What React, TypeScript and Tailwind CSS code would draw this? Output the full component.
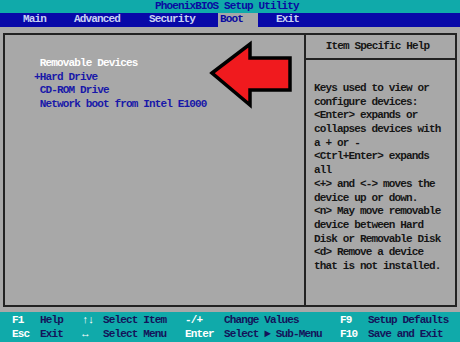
import React from "react";

const font = "font-['Liberation_Mono','DejaVu_Sans_Mono',monospace] text-[11px] tracking-[-0.85px] leading-[13.68px] font-bold";

const help = [
  "Keys used to view or",
  "configure devices:",
  "<Enter> expands or",
  "collapses devices with",
  "a + or -",
  "<Ctrl+Enter> expands",
  "all",
  "<+> and <-> moves the",
  "device up or down.",
  "<n> May move removable",
  "device between Hard",
  "Disk or Removable Disk",
  "<d> Remove a device",
  "that is not installed.",
];

function FooterLine({ cells }: { cells: string[] }) {
  const widths = ["w-[28px]", "w-[42px]", "w-[21px]", "w-[82px]", "w-[39px]", "w-[116px]", "w-[28px]", "w-[90px]"];
  return (
    <div className="flex pl-[12px] h-[13.68px]">
      {cells.map((c, i) => (
        <span
          key={i}
          className={`${widths[i]} shrink-0 whitespace-pre ${i % 2 === 0 ? "text-white" : "text-[#14145a]"}`}
        >
          {c}
        </span>
      ))}
    </div>
  );
}

export default function App() {
  return (
    <div className={`w-[460px] h-[342px] overflow-hidden bg-[#a8a8a8] flex flex-col ${font}`}>
      {/* Title */}
      <div className="h-[13px] bg-[#10aaaa] flex items-center pl-[155px] text-[#0a0aa0] whitespace-pre">
        PhoenixBIOS Setup Utility
      </div>
      {/* Menu */}
      <div className="h-[14px] bg-[#0808a8] flex items-center text-[#c8d0f4] whitespace-pre">
        <span className="ml-[23px] w-[51px]">Main</span>
        <span className="w-[75px]">Advanced</span>
        <span className="w-[69px]">Security</span>
        <span className="w-[40px] h-full bg-[#a8a8a8] text-[#0a0aa0] pl-[2px] flex items-center">Boot</span>
        <span className="ml-[18px]">Exit</span>
      </div>
      {/* Main */}
      <div className="relative h-[285px] pt-[6px] pl-[3px] pr-[3px] pb-[5px]">
        <div className="h-full border-2 border-[#222222] flex">
          <div className="w-[301px] border-r-2 border-[#222222] pt-[22px] pl-[29px]">
            <div className="flex whitespace-pre">
              <span className="w-[5.75px]"> </span>
              <span className="text-white">Removable Devices</span>
            </div>
            <div className="flex whitespace-pre text-[#1818a8]">
              <span className="w-[5.75px]">+</span>
              <span>Hard Drive</span>
            </div>
            <div className="flex whitespace-pre text-[#1818a8]">
              <span className="w-[5.75px]"> </span>
              <span>CD-ROM Drive</span>
            </div>
            <div className="flex whitespace-pre text-[#1818a8]">
              <span className="w-[5.75px]"> </span>
              <span>Network boot from Intel E1000</span>
            </div>
          </div>
          <div className="flex-1 flex flex-col">
            <div className="h-[25px] border-b-2 border-[#222222] flex items-center justify-center text-[#161616] pr-[6px]">
              Item Specific Help
            </div>
            <div className="pt-[22px] pl-[8px] text-[#161616] whitespace-pre">
              {help.map((l, i) => (
                <div key={i}>{l}</div>
              ))}
            </div>
          </div>
        </div>
        <svg className="absolute left-0 top-0 pointer-events-none" width="300" height="90" viewBox="0 27 300 90">
          <polygon
            points="212,73 250,44 250,58 290,58 290,90 250,90 250,105"
            fill="#f01a1e"
            stroke="#000"
            strokeWidth="3.5"
            strokeLinejoin="miter"
          />
        </svg>
      </div>
      {/* Footer */}
      <div className="h-[30px] bg-[#10aaaa] pt-[2px]">
        <FooterLine cells={["F1", "Help", "↑↓", "Select Item", "-/+", "Change Values", "F9", "Setup Defaults"]} />
        <FooterLine cells={["Esc", "Exit", "↔", "Select Menu", "Enter", "Select ► Sub-Menu", "F10", "Save and Exit"]} />
      </div>
    </div>
  );
}
